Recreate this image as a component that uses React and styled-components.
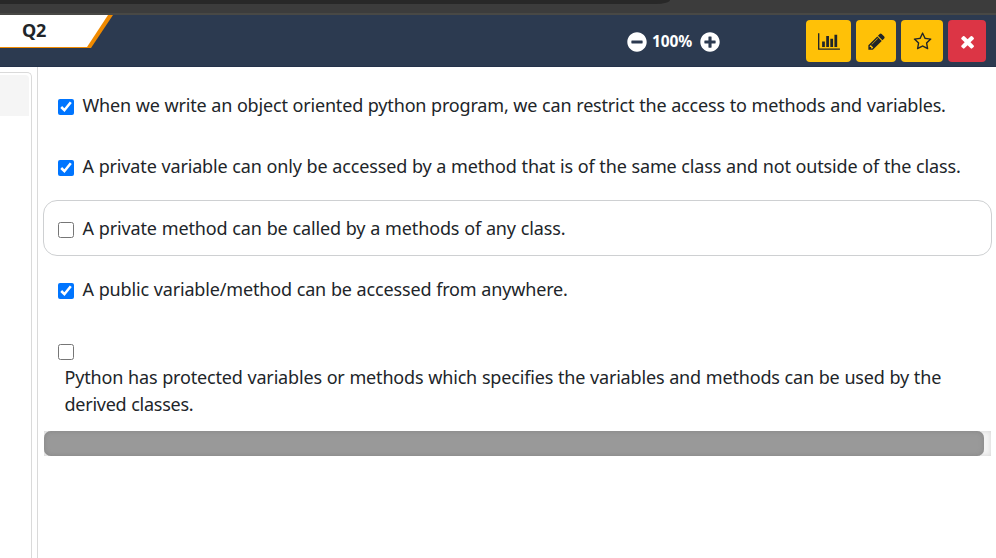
import React from "react";
import styled, { createGlobalStyle } from "styled-components";
import { FaMinusCircle, FaPlusCircle } from "react-icons/fa";

const GlobalStyle = createGlobalStyle`
  *, *::before, *::after { box-sizing: border-box; }
  body {
    margin: 0;
    background: #fff;
    color: #212529;
    font-family: "Noto Sans", "Open Sans", sans-serif;
    overflow: hidden;
  }
`;

const Page = styled.div`
  display: flex;
  flex-direction: column;
  width: 996px;
  height: 558px;
  overflow: hidden;
`;

const BrowserEdge = styled.div`
  flex: none;
  height: 15px;
  background: #3c3c3c;
  border-bottom: 2px solid #484845;
`;

const AddressBar = styled.div`
  width: 670px;
  height: 4px;
  background: #282828;
  border-bottom-right-radius: 14px 4px;
`;

const Header = styled.header`
  flex: none;
  display: flex;
  align-items: flex-start;
  height: 52px;
  background: #2c3a50;
  border-bottom: 1px solid #25324a;
`;

const TabEdge = styled.div`
  width: 113px;
  height: 33px;
  background: #f08a00;
  clip-path: polygon(0 0, 100% 0, 91px 100%, 0 100%);
`;

const Tab = styled.div`
  width: 108px;
  height: 32px;
  padding-left: 22px;
  background: #fff;
  clip-path: polygon(0 0, 100% 0, 87px 100%, 0 100%);
  font-size: 18px;
  font-weight: 700;
  line-height: 30px;
  letter-spacing: -0.2px;
`;

const Zoom = styled.div`
  display: flex;
  align-items: center;
  gap: 5px;
  width: 93px;
  height: 20px;
  margin: 17px 0 0 514px;
  color: #fff;
  svg { display: block; flex: none; }
`;

const ZoomValue = styled.span`
  width: 43px;
  font-size: 15.5px;
  font-weight: 700;
  line-height: 20px;
  letter-spacing: -0.1px;
  margin-top: -2px;
  white-space: nowrap;
`;

const Actions = styled.div`
  display: flex;
  gap: 5px;
  margin: 5px 0 0 86px;
`;

const ActionButton = styled.button`
  display: flex;
  align-items: center;
  justify-content: center;
  width: ${(p) => p.$width}px;
  height: 42px;
  padding: 1px 0 0 1px;
  border: 0;
  border-radius: 4px;
  background: ${(p) => (p.$danger ? "#dc3545" : "#ffc107")};
  color: ${(p) => (p.$danger ? "#fff" : "#212529")};
  svg { display: block; height: 19.2px; fill: currentColor; }
`;

const Body = styled.div`
  flex: 1;
  display: flex;
  min-height: 0;
`;

const Sidebar = styled.aside`
  width: 32px;
  margin-top: 5px;
  padding: 2px 2px 0 0;
  border: solid #dadada;
  border-width: 1px 1px 0 0;
  border-top-right-radius: 5px;
`;

const SidebarItem = styled.div`
  height: 41px;
  background: #f5f5f5;
  border-top-right-radius: 4px;
`;

const Content = styled.main`
  width: 959px;
  margin-left: 5px;
  padding: 10px 4px 0 5px;
  border-left: 1px solid #dadada;
`;

const Option = styled.label`
  display: flex;
  align-items: center;
  height: 56px;
  margin-bottom: 5.4px;
  padding: ${(p) => (p.$outlined ? 1.4 : 0)}px 0 0 14px;
  border: 1px solid ${(p) => (p.$outlined ? "#ced0d2" : "transparent")};
  border-radius: 14px;
`;

const Checkbox = styled.input`
  flex: none;
  width: 16px;
  height: 16px;
  margin: 3px 8.5px 0 0;
`;

const OptionText = styled.span`
  font-size: 18px;
  font-weight: 370;
  line-height: 27px;
  white-space: nowrap;
  word-spacing: 0.3px;
  letter-spacing: ${(p) => p.$spacing}px;
`;

const LongOption = styled.div`
  display: flex;
  flex-direction: column;
  align-items: flex-start;
  height: 108.4px;
  padding: 18px 0 0 15px;
`;

const LongText = styled.div`
  display: flex;
  flex-direction: column;
  margin: 4px 0 0 6.5px;
`;

const ScrollTrack = styled.div`
  width: 947px;
  height: 25px;
  margin-left: 1px;
  background: #f3f3f3;
  box-shadow: inset 0 0 5px #d5d5d5;
`;

const ScrollThumb = styled.div`
  width: 940px;
  height: 25px;
  border-radius: 7px;
  background: #999;
  box-shadow: inset 0 0 5px #858585;
`;

const ICONS = {
  chart: [2048, "M640 896v512h-256v-512h256zm384-512v1024h-256v-1024h256zm1024 1152v128h-2048v-1536h128v1408h1920zm-640-896v768h-256v-768h256zm384-384v1152h-256v-1152h256z"],
  pencil: [1792, "M491 1536l91-91-235-235-91 91v107h128v128h107zm523-928q0-22-22-22-10 0-17 7l-542 542q-7 7-7 17 0 22 22 22 10 0 17-7l542-542q7-7 7-17zm-54-192l416 416-832 832h-416v-416zm683 96q0 53-37 90l-166 166-416-416 166-165q36-38 90-38 53 0 91 38l235 234q37 39 37 91z"],
  star: [1792, "M1201 1004l306-297-422-62-189-382-189 382-422 62 306 297-73 421 378-199 377 199zm527-357q0 22-26 48l-363 354 86 500q1 7 1 20 0 50-41 50-19 0-40-12l-449-236-449 236q-22 12-40 12-21 0-31.5-14.5t-10.5-35.5q0-6 2-20l86-500-364-354q-25-27-25-48 0-37 56-46l502-73 225-455q19-41 49-41t49 41l225 455 502 73q56 9 56 46z"],
  close: [1792, "M1490 1322q0 40-28 68l-136 136q-28 28-68 28t-68-28l-294-294-294 294q-28 28-68 28t-68-28l-136-136q-28-28-28-68t28-68l294-294-294-294q-28-28-28-68t28-68l136-136q28-28 68-28t68 28l294 294 294-294q28-28 68-28t68 28l136 136q28 28 28 68t-28 68l-294 294 294 294q28 28 28 68z"],
};

function Icon({ name }) {
  const [width, path] = ICONS[name];
  return (
    <svg viewBox={`0 0 ${width} 1792`} aria-hidden="true">
      <path d={path} />
    </svg>
  );
}

const ACTIONS = [
  { icon: "chart", width: 45, label: "Statistics" },
  { icon: "pencil", width: 40, label: "Edit" },
  { icon: "star", width: 42, label: "Favourite" },
  { icon: "close", width: 38, label: "Close", danger: true },
];

const OPTIONS = [
  { text: "When we write an object oriented python program, we can restrict the access to methods and variables.", checked: true, spacing: -0.18 },
  { text: "A private variable can only be accessed by a method that is of the same class and not outside of the class.", checked: true, spacing: -0.155 },
  { text: "A private method can be called by a methods of any class.", outlined: true, spacing: -0.13 },
  { text: "A public variable/method can be accessed from anywhere.", checked: true, spacing: -0.16 },
];

export default function App() {
  return (
    <Page>
      <GlobalStyle />
      <BrowserEdge><AddressBar /></BrowserEdge>
      <Header>
        <TabEdge><Tab>Q2</Tab></TabEdge>
        <Zoom>
          <FaMinusCircle size={20} />
          <ZoomValue>100%</ZoomValue>
          <FaPlusCircle size={20} />
        </Zoom>
        <Actions>
          {ACTIONS.map((a) => (
            <ActionButton key={a.icon} $width={a.width} $danger={a.danger} aria-label={a.label}>
              <Icon name={a.icon} />
            </ActionButton>
          ))}
        </Actions>
      </Header>
      <Body>
        <Sidebar><SidebarItem /></Sidebar>
        <Content>
          {OPTIONS.map((o) => (
            <Option key={o.text} $outlined={o.outlined}>
              <Checkbox type="checkbox" defaultChecked={o.checked} />
              <OptionText $spacing={o.spacing}>{o.text}</OptionText>
            </Option>
          ))}
          <LongOption>
            <Checkbox type="checkbox" aria-label="Protected variables" />
            <LongText>
              <OptionText $spacing={-0.17}>Python has protected variables or methods which specifies the variables and methods can be used by the</OptionText>
              <OptionText $spacing={-0.25}>derived classes.</OptionText>
            </LongText>
          </LongOption>
          <ScrollTrack><ScrollThumb /></ScrollTrack>
        </Content>
      </Body>
    </Page>
  );
}
